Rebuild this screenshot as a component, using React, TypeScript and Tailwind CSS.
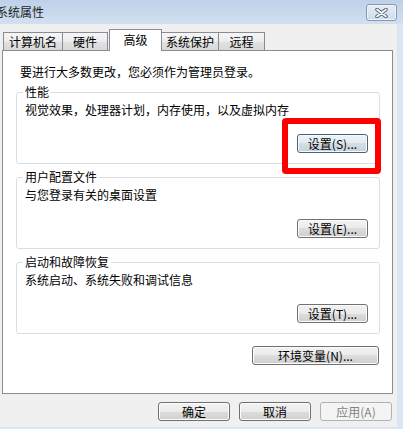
import React from 'react';

const btnBase =
  "h-[19px] rounded-[3px] border flex items-center justify-center text-[12px] leading-none";
const btnNormal =
  "border-[#707070] bg-[linear-gradient(to_bottom,#f2f2f2_0%,#ebebeb_50%,#dddddd_50%,#cfcfcf_100%)] shadow-[inset_0_0_0_1px_#fcfcfc]";
const btnFocus =
  "border-[#4a6378] bg-[linear-gradient(to_bottom,#eef3f6_0%,#e4ebef_50%,#d4dee4_50%,#c6d2d9_100%)] shadow-[inset_0_0_0_1px_#f6fafc]";
const btnDisabled = "border-[#adb2b5] bg-[#f4f4f4] text-[#838383]";

const WinButton = ({
  label,
  className = "",
  variant = "normal",
}: {
  label: string;
  className?: string;
  variant?: "normal" | "focus" | "disabled";
}) => {
  const look = variant === "focus" ? btnFocus : variant === "disabled" ? btnDisabled : btnNormal;
  return <div className={`${btnBase} ${look} ${className}`}>{label}</div>;
};

const GroupBox = ({
  title,
  text,
  button,
  variant,
  className = "",
}: {
  title: string;
  text: string;
  button: string;
  variant?: "normal" | "focus";
  className?: string;
}) => (
  <fieldset className={`ml-[13px] w-[364px] border border-[#d5dfe5] rounded-[3px] ${className}`}>
    <legend className="ml-[6px] px-[2px] leading-[14px]">{title}</legend>
    <div className="flex flex-col">
      <div className="ml-[8px] mt-[4px] leading-[14px]">{text}</div>
      <WinButton label={button} variant={variant} className="self-end mr-[11px] mt-[17px] mb-[10px] w-[71px]" />
    </div>
  </fieldset>
);

const tabs = [
  { label: "计算机名", w: "w-[60px]", extra: "" },
  { label: "硬件", w: "w-[46px]", extra: "ml-[-1px]" },
  { label: "高级", w: "w-[53px]", extra: "ml-[1px]", active: true },
  { label: "系统保护", w: "w-[58px]", extra: "ml-[-1px]" },
  { label: "远程", w: "w-[47px]", extra: "ml-[-1px]" },
];

export default function App() {
  return (
    <div className="relative w-[403px] h-[429px] overflow-hidden bg-[#d9e5f3] text-[12px] text-black font-['Noto_Sans_CJK_SC','Liberation_Sans',sans-serif]">
      {/* title bar */}
      <div className="h-[24px] flex items-start justify-between bg-[linear-gradient(to_bottom,#bed1e9,#d2e0f0)] pr-[6px]">
        <span className="ml-[-4px] mt-[5px] leading-[14px] text-[#1e1e1e]">系统属性</span>
        <div className="mt-[4px] w-[31px] h-[17px] rounded-[3px] border border-[#8597b3] bg-[linear-gradient(to_bottom,#e6eef7,#cfdcec)] shadow-[inset_0_0_0_1px_#eef4fa] flex items-center justify-center">
          <svg width="13" height="10" viewBox="0 0 13 10">
            <path d="M2 1.5 L11 8.5 M11 1.5 L2 8.5" stroke="#58657a" strokeWidth="3.6" strokeLinecap="round" />
            <path d="M2 1.5 L11 8.5 M11 1.5 L2 8.5" stroke="#ffffff" strokeWidth="1.6" strokeLinecap="round" />
          </svg>
        </div>
      </div>

      <div className="flex h-[403px]">
        <div className="w-[397px] bg-[#f0f0f0] pt-[5px]">
          {/* tabs */}
          <div className="relative z-10 flex items-end h-[21px] pl-[3px]">
            {tabs.map((t, i) =>
              t.active ? (
                <div
                  key={i}
                  className={`${t.w} ${t.extra} h-[22px] mb-[-1px] border-l border-t border-r border-[#898c95] bg-white flex justify-center pt-[3px] leading-[14px]`}
                >
                  {t.label}
                </div>
              ) : (
                <div
                  key={i}
                  className={`${t.w} ${t.extra} h-[18px] border-l border-t border-r border-[#898c95] bg-[linear-gradient(to_bottom,#f6f6f6_0%,#ececec_50%,#e2e2e2_50%,#d8d8d8_100%)] flex justify-center pt-[2px] leading-[14px]`}
                >
                  {t.label}
                </div>
              )
            )}
          </div>

          {/* panel */}
          <div className="ml-[2px] w-[391px] h-[344px] border border-[#898c95] bg-white flex flex-col">
            <div className="ml-[17px] mt-[14px] leading-[14px]">要进行大多数更改，您必须作为管理员登录。</div>
            <GroupBox
              className="mt-[6px]"
              title="性能"
              text="视觉效果，处理器计划，内存使用，以及虚拟内存"
              button="设置(S)..."
              variant="focus"
            />
            <GroupBox className="mt-[6px]" title="用户配置文件" text="与您登录有关的桌面设置" button="设置(E)..." />
            <GroupBox className="mt-[6px]" title="启动和故障恢复" text="系统启动、系统失败和调试信息" button="设置(T)..." />
            <WinButton label="环境变量(N)..." className="self-end mr-[13px] mt-[12px] w-[127px]" />
          </div>

          {/* dialog buttons */}
          <div className="mt-[8px] flex justify-end gap-[9px] pr-[5px]">
            <WinButton label="确定" className="w-[72px]" />
            <WinButton label="取消" className="w-[72px]" />
            <WinButton label="应用(A)" variant="disabled" className="w-[72px]" />
          </div>
        </div>
      </div>

      {/* red annotation */}
      <div className="absolute left-[282px] top-[118px] w-[99px] h-[56px] border-[6px] border-[#ff0000] rounded-[4px]" />
    </div>
  );
}
